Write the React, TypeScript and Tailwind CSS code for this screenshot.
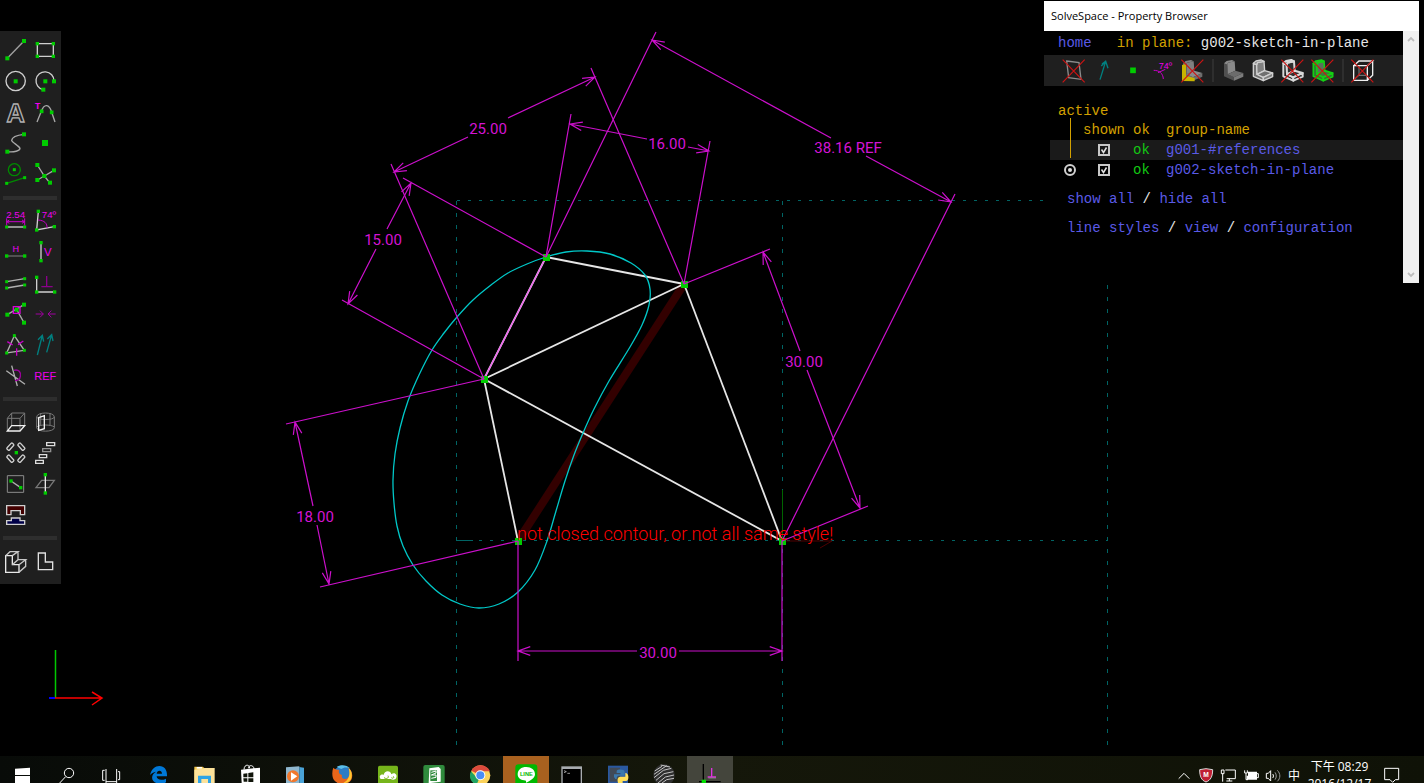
import React from "react";

type Pt = [number, number];

const GREEN = "#00cc00";
const MAG = "#c800c8";
const WHITE = "#cfcfcf";
const GRAY = "#8c8c8c";
const SANS = '"Liberation Sans", sans-serif';

/* ---------- small drawing helpers ---------- */

function Dots({ at, s = 10 }: { at: Pt[]; s?: number }) {
  return (
    <g fill={GREEN}>
      {at.map(([x, y], i) => (
        <rect key={i} x={x - s / 2} y={y - s / 2} width={s} height={s} />
      ))}
    </g>
  );
}

function P({ d, c = WHITE, w = 4, f = "none" }: { d: string; c?: string; w?: number; f?: string }) {
  return <path d={d} stroke={c} strokeWidth={w} fill={f} />;
}

function Label({ x, y, size, bold, children }: { x: number; y: number; size: number; bold?: boolean; children: string }) {
  return (
    <text x={x} y={y} fontSize={size} fontFamily={SANS} fontWeight={bold ? 700 : 400} fill="#f000f0" textAnchor="middle">
      {children}
    </text>
  );
}

/* ---------- left toolbar ---------- */

type Tool = { name: string; art: React.ReactNode };

const drawTools: Tool[] = [
  { name: "Line segment", art: <><P d="M22 100 L72 48" c="#a0a0a0" /><Dots at={[[22, 100], [72, 48]]} s={12} /></> },
  { name: "Rectangle", art: <><P d="M112 56H160V94H112Z" /><Dots at={[[112, 56], [160, 56], [112, 94], [160, 94]]} /></> },
  { name: "Circle", art: <><circle cx={47} cy={168} r={29} stroke={WHITE} strokeWidth={4} fill="none" /><Dots at={[[47, 169]]} s={12} /></> },
  { name: "Arc", art: <><P d="M162 168 A27 27 0 1 0 130 194" /><Dots at={[[136, 169], [162, 169], [130, 194]]} s={12} /></> },
  {
    name: "Text",
    art: (
      <text x={47} y={291} fontSize={76} fontFamily={SANS} fontWeight={700} textAnchor="middle" fill="none" stroke="#b0b0b0" strokeWidth={4}>
        A
      </text>
    ),
  },
  {
    name: "Tangent arc",
    art: (
      <>
        <P d="M111 291 L124 259 C132 236 148 236 155 262 L165 291" c="#a8a8a8" />
        <Label x={113} y={252} size={26} bold>T</Label>
        <Dots at={[[125, 259], [155, 262]]} s={11} />
      </>
    ),
  },
  { name: "Bezier spline", art: <><P d="M22 380 C42 382 60 378 60 370 C56 362 36 352 35 346 C36 336 54 330 72 328" c="#a8a8a8" /><Dots at={[[22, 380], [72, 328]]} s={12} /></> },
  { name: "Datum point", art: <Dots at={[[135, 354]]} s={18} /> },
  {
    name: "Toggle construction",
    art: (
      <>
        <circle cx={43} cy={434} r={18} stroke="#008a00" strokeWidth={4} fill="none" />
        <P d="M20 475 L74 458" c="#008a00" />
        <Dots at={[[43, 434], [20, 475], [74, 458]]} s={9} />
      </>
    ),
  },
  {
    name: "Split curves",
    art: (
      <>
        <P d="M112 420 L133 453 L149 473 M112 465 L133 453 L162 436" c="#a8a8a8" />
        <Dots at={[[112, 420], [133, 453], [150, 473], [112, 465], [162, 436]]} s={12} />
      </>
    ),
  },
];

const constraintTools: Tool[] = [
  {
    name: "Distance",
    art: (
      <>
        <Label x={47} y={68} size={29}>2.54</Label>
        <P d="M20 80H74 M20 70V92 M74 70V92 M28 75L20 80L28 85 M66 75L74 80L66 85" c={MAG} w={3} />
        <P d="M20 96H74" />
        <Dots at={[[20, 96], [74, 96]]} s={9} />
      </>
    ),
  },
  {
    name: "Angle",
    art: (
      <>
        <P d="M115 49 L110 105 L163 95" />
        <P d="M114 75 C134 76 142 86 141 99" c={MAG} w={3} />
        <Label x={147} y={68} size={29}>74º</Label>
        <Dots at={[[115, 49], [110, 105], [163, 95]]} />
      </>
    ),
  },
  { name: "Horizontal", art: <><P d="M20 183H74" c="#6a6a6a" /><Label x={47} y={171} size={27}>H</Label><Dots at={[[20, 183], [74, 183]]} /></> },
  { name: "Vertical", art: <><P d="M123 143V197" /><Label x={143} y={184} size={34}>V</Label><Dots at={[[123, 143], [123, 197]]} /></> },
  { name: "Parallel", art: <><P d="M20 260L74 251 M20 279L74 270" c="#b0b0b0" /><Dots at={[[20, 260], [74, 251], [20, 279], [74, 270]]} s={9} /></> },
  { name: "Perpendicular", art: <><P d="M110 247V291H164" /><P d="M124 275H158 M140 243V275" c="#8a008a" /><Dots at={[[110, 247], [110, 291], [164, 291]]} /></> },
  {
    name: "Point on curve",
    art: (
      <>
        <P d="M22 359L72 329 M50 344L72 383" c="#a8a8a8" />
        <Dots at={[[22, 359], [72, 329], [72, 383], [50, 344]]} s={12} />
        <P d="M40 335H60V355H40Z" c="#d800d8" />
      </>
    ),
  },
  { name: "Symmetric", art: <P d="M107 357H130 M120 347L130 357L120 367 M167 357H144 M154 347L144 357L154 367" c="#a000a0" w={3} /> },
  {
    name: "Equal",
    art: (
      <>
        <P d="M43 422L20 474L73 466Z" c="#b0b0b0" />
        <P d="M22 440L38 450 M70 438L54 449 M50 460V482" c={MAG} />
        <Dots at={[[43, 422], [20, 474], [73, 466]]} s={9} />
      </>
    ),
  },
  { name: "Same orientation", art: <P d="M112 480L127 421 M114 434L127 421L131 440 M140 472L155 419 M142 432L155 419L159 438" c="#008080" /> },
  { name: "Other supplementary angle", art: <><P d="M35 512L52 573 M19 527L75 568" c="#b0b0b0" /><P d="M42 526C56 522 64 532 61 544C60 552 54 558 45 556" c="#a000a0" /></> },
  { name: "Reference", art: <Label x={136} y={556} size={33}>REF</Label> },
];

const groupTools: Tool[] = [
  {
    name: "Extrude",
    art: (
      <>
        <P d="M22 108V70L35 54H74V92 M22 70H60L74 54 M60 70V108 M35 54V92" c="#787878" w={3} />
        <P d="M22 108H60L74 92H35Z" c="#f0f0f0" />
      </>
    ),
  },
  {
    name: "Lathe",
    art: (
      <>
        <P d="M110 66C110 50 163 50 163 66C163 76 110 76 110 66 M110 66V98C110 112 163 112 163 98V66 M122 54V92 M150 54V92 M110 96C118 88 154 88 163 96" c="#787878" w={3} />
        <P d="M116 68L133 62V101L116 106Z" c="#f0f0f0" />
      </>
    ),
  },
  {
    name: "Step rotating",
    art: (
      <>
        <g stroke={WHITE} strokeWidth={4} fill="none">
          <rect x={-12} y={-5} width={24} height={10} rx={3} transform="translate(31 155) rotate(-48)" />
          <rect x={-12} y={-5} width={24} height={10} rx={3} transform="translate(64 155) rotate(48)" />
          <rect x={-12} y={-5} width={24} height={10} rx={3} transform="translate(31 191) rotate(48)" />
          <rect x={-12} y={-5} width={24} height={10} rx={3} transform="translate(64 191) rotate(-48)" />
        </g>
        <Dots at={[[49, 173]]} />
      </>
    ),
  },
  { name: "Step translating", art: <><P d="M140 143H164V152H140Z M118 179H140V188H118Z M107 196H130V205H107Z" c="#dcdcdc" /><P d="M128 161H152V170H128Z" c="#909090" /></> },
  { name: "Sketch in workplane", art: <><P d="M22 242H71V292H22Z" c="#8c8c8c" w={3} /><P d="M33 258L62 278" c="#b0b0b0" /><Dots at={[[33, 258], [62, 278]]} /></> },
  { name: "Sketch in 3d", art: <><P d="M108 278L125 256H163L147 278Z" c="#787878" /><P d="M136 238V294" c="#e8e8e8" /><Dots at={[[136, 239], [136, 294]]} /></> },
  { name: "Link", art: <><P d="M20 332H74V359H61V347H33V359H20Z" f="#440000" /><P d="M20 388V377H34V369H60V377H74V388Z" f="#000048" /></> },
];

const viewTools: Tool[] = [
  {
    name: "Nearest isometric view",
    art: (
      <>
        <P d="M17 482H37V509H57V532H17Z" c="#e8e8e8" />
        <P d="M17 482L30 470H54L37 482 M54 470V494 M37 509L54 494H77L57 509 M77 494V514L57 532" c="#c8c8c8" />
      </>
    ),
  },
  { name: "Align view to workplane", art: <P d="M115 474H136V501H158V524H115Z" c="#e0e0e0" /> },
];

function ToolGroup({ tools, top }: { tools: Tool[]; top: number }) {
  return (
    <div className="grid grid-cols-2">
      {tools.map((t, i) => (
        <button key={t.name} type="button" aria-label={t.name} className="h-[31px] w-[30px]">
          <svg viewBox={`${(i % 2) * 90} ${top + Math.floor(i / 2) * 93} 90 93`} className="h-[31px] w-[30px]">
            {t.art}
          </svg>
        </button>
      ))}
    </div>
  );
}

function Divider() {
  return <div className="mx-[3px] mt-1.5 mb-[5px] h-1 bg-[#2e2e2e]" />;
}

function Toolbar() {
  return (
    <nav aria-label="Sketch tools" className="relative mt-[31px] w-[61px] self-start bg-[#1f1f1f] pt-1 pr-px pb-2">
      <ToolGroup tools={drawTools} top={30} />
      <Divider />
      <ToolGroup tools={constraintTools} top={30} />
      <Divider />
      <ToolGroup tools={groupTools} top={33} />
      <Divider />
      <ToolGroup tools={viewTools} top={450} />
    </nav>
  );
}

/* ---------- sketch canvas ---------- */

const A: Pt = [546, 257];
const B: Pt = [684, 284];
const C: Pt = [484, 379];
const D: Pt = [518, 541];
const E: Pt = [782, 541];

type Dim = { text: string; at: Pt; ext: [Pt, Pt][]; segs: [Pt, Pt][] };

// Each segment starts at its arrow tip and ends next to the dimension text.
const dims: Dim[] = [
  { text: "25.00", at: [488, 134], ext: [[C, [391, 164]], [B, [591, 68]]], segs: [[[394, 172], [468, 137]], [[595, 77], [508, 118]]] },
  { text: "16.00", at: [667, 149], ext: [[A, [571, 114]], [B, [710, 141]]], segs: [[[570, 124], [647, 139]], [[709, 151], [688, 147]]] },
  { text: "38.16 REF", at: [848, 153], ext: [[A, [656, 32]], [E, [955, 194]]], segs: [[[652, 40], [831, 138]], [[951, 202], [866, 156]]] },
  { text: "15.00", at: [383, 245], ext: [[A, [403, 178]], [C, [342, 300]]], segs: [[[411, 183], [387, 229]], [[348, 304], [376, 249]]] },
  { text: "30.00", at: [804, 367], ext: [[B, [770, 249]], [E, [868, 506]]], segs: [[[763, 252], [800, 351]], [[860, 508], [807, 370]]] },
  { text: "18.00", at: [315, 522], ext: [[C, [286, 424]], [D, [320, 587]]], segs: [[[295, 422], [313, 506]], [[329, 584], [317, 525]]] },
  { text: "30.00", at: [658, 658], ext: [[D, [518, 661]], [E, [782, 661]]], segs: [[[518, 651], [637, 651]], [[782, 651], [679, 651]]] },
];

const curve: Pt[] = [
  [546, 257], [566, 252], [587, 251], [610, 254], [631, 263], [645, 275], [650, 289], [649, 305], [642, 325], [630, 347],
  [609, 381], [594, 409], [583, 433], [574, 455], [565, 481], [556, 511], [547, 541], [535, 570], [518, 592], [499, 604],
  [479, 608], [460, 604], [442, 595], [426, 581], [413, 565], [403, 546], [397, 526], [394, 503], [393, 480], [395, 454],
  [400, 428], [408, 401], [419, 375], [432, 350], [444, 333], [457, 317], [473, 300], [491, 285], [508, 273], [527, 264],
];

function smooth(pts: Pt[]) {
  const n = pts.length;
  let d = `M${pts[0][0]} ${pts[0][1]}`;
  for (let i = 0; i < n; i++) {
    const [p0, p1, p2, p3] = [pts[(i + n - 1) % n], pts[i], pts[(i + 1) % n], pts[(i + 2) % n]];
    d += `C${p1[0] + (p2[0] - p0[0]) / 6} ${p1[1] + (p2[1] - p0[1]) / 6} ${p2[0] - (p3[0] - p1[0]) / 6} ${p2[1] - (p3[1] - p1[1]) / 6} ${p2[0]} ${p2[1]}`;
  }
  return d + "Z";
}

function seg([a, b]: [Pt, Pt]) {
  return `M${a[0]} ${a[1]}L${b[0]} ${b[1]}`;
}

function arrow([tip, to]: [Pt, Pt]) {
  const dir = Math.atan2(to[1] - tip[1], to[0] - tip[0]);
  const wing = (s: number) => `${tip[0] + 13 * Math.cos(dir + s)} ${tip[1] + 13 * Math.sin(dir + s)}`;
  return `${seg([tip, to])}M${wing(0.34)}L${tip[0]} ${tip[1]}L${wing(-0.34)}`;
}

function Sketch() {
  return (
    <svg className="absolute inset-0 h-full w-full" aria-label="Sketch">
      <g stroke="#006464" strokeWidth={1} fill="none" shapeRendering="crispEdges">
        <path d="M457 200.5H1108 M457 540.5H1108" strokeDasharray="3 8" />
        <path d="M456.5 201V750 M782.5 201V750 M1107.5 201V750" strokeDasharray="4 8" />
        <path d="M460 540.5H473" />
      </g>
      <path d={seg([B, D])} stroke="#330000" strokeWidth={8} />
      <path d="M782.5 541V490" stroke="#006400" />
      <path d="M782 541H832 M832 541L820 548" stroke="#500000" fill="none" />
      <g stroke="#e6e6e6" strokeWidth={1.8}>
        {([[A, B], [A, C], [C, B], [C, D], [C, E], [B, E]] as [Pt, Pt][]).map((s, i) => (
          <path key={i} d={seg(s)} />
        ))}
      </g>
      <path d={seg([A, C])} stroke="#f060f0" strokeWidth={1.4} />
      <path d={smooth(curve)} stroke="#00c8c8" strokeWidth={1.3} fill="none" />
      <g fill={GREEN}>
        {[A, B, C, D, E].map(([x, y], i) => (
          <rect key={i} x={x - 3} y={y - 3} width={7} height={7} />
        ))}
      </g>
      <g stroke="#cc10cc" strokeWidth={1.2} fill="none">
        {dims.map((m, i) => (
          <path key={i} d={m.ext.map(seg).join("") + m.segs.map(arrow).join("")} />
        ))}
      </g>
      <g fontFamily="Roboto, sans-serif" fontSize={15} fill="#d414d4" textAnchor="middle">
        {dims.map((m, i) => (
          <text key={i} x={m.at[0]} y={m.at[1]}>
            {m.text}
          </text>
        ))}
      </g>
      <text x={517} y={540} fontFamily="Roboto, sans-serif" fontSize={18} fontWeight={300} fill="#ff0000">
        not closed contour, or not all same style!
      </text>
      <path d="M55.5 650V698" stroke="#00c800" strokeWidth={1.5} />
      <path d="M49 698H55" stroke="#0000ff" strokeWidth={2} />
      <path d="M55 698H102 M92 692L102 698L92 705" stroke="#ff0000" strokeWidth={1.5} fill="none" />
    </svg>
  );
}

/* ---------- property browser ---------- */

function Cross({ x, y = 179 }: { x: number; y?: number }) {
  return <path d={`M${x} ${y}l66 68M${x + 66} ${y}l-66 68`} stroke="#cc1414" strokeWidth={3.5} />;
}

type ChairProps = { x: number; side: string; back: string; seat: string; front: string; line?: string; w?: number };

function Chair({ x, side, back, seat, front, line = "none", w = 4 }: ChairProps) {
  return (
    <g transform={`translate(${x} 180)`} stroke={line} strokeWidth={w} strokeLinejoin="round">
      <path d="M2 10L12 14L13 42L32 52V62L2 49Z" fill={side} />
      <path d="M12 14L14 8L34 4L36 32L13 43Z" fill={back} />
      <path d="M2 10L10 3L26 0L34 4L14 8L12 14Z" fill={back} />
      <path d="M13 43L36 32L60 39L32 52Z" fill={seat} />
      <path d="M32 52L60 39V50L32 62Z" fill={front} />
    </g>
  );
}

type ViewIcon = { name: string; x: number; art: React.ReactNode };

const viewIcons: ViewIcon[][] = [
  [
    { name: "Workplanes", x: 54, art: <><P d="M80 183L117 188L123 238L86 233Z" c={GRAY} /><Cross x={68} /></> },
    { name: "Normals", x: 144, art: <P d="M180 239L197 184 M184 198L197 184L204 205 M186 192L197 184" c="#008080" /> },
    { name: "Points", x: 234, art: <Dots at={[[279, 211]]} s={17} /> },
    {
      name: "Constraints",
      x: 324,
      art: (
        <>
          <P d="M341 211C358 211 369 220 370 237 M354 218L376 208" c={MAG} w={3} />
          <Label x={376} y={206} size={27}>74º</Label>
        </>
      ),
    },
    {
      name: "Faces",
      x: 414,
      art: (
        <>
          <Chair x={427} side="#6e6e6e" back="#808080" seat="#8c8c8c" front="#6e6e6e" />
          <path d="M426 195L438 192V228L464 234V244L426 243Z" fill="#c8b400" />
          <Cross x={424} />
        </>
      ),
    },
  ],
  [
    { name: "Shaded", x: 534, art: <Chair x={550} side="#505050" back="#8a8a8a" seat="#6c6c6c" front="#7c7c7c" /> },
    { name: "Edges", x: 624, art: <Chair x={638} side="#707070" back="#808080" seat="#707070" front="#808080" line="#d0d0d0" /> },
    { name: "Outlines", x: 714, art: <><Chair x={728} side="#1f1f1f" back="#303030" seat="#303030" front="#1f1f1f" line="#d8d8d8" w={6} /><Cross x={724} /></> },
    { name: "Mesh", x: 804, art: <><Chair x={818} side="#2f7a2f" back="#5a705a" seat="#3c7a3c" front="#2f7a2f" line="#14d014" w={5} /><Cross x={814} /></> },
  ],
  [
    {
      name: "Hidden lines",
      x: 924,
      art: (
        <>
          <P d="M941 197H982V241H941Z M941 197L957 183H998L982 197 M998 183V226L982 241" c="#f0f0f0" />
          <P d="M957 197V226L941 241 M957 226H982" c="#b0b0b0" w={2} />
          <Cross x={934} />
        </>
      ),
    },
  ],
];

function Tick({ name }: { name: string }) {
  return (
    <label className="relative ml-[15px] block size-3">
      <input type="checkbox" defaultChecked aria-label={name} className="peer block size-3 appearance-none border-2 border-[#c8c8c8]" />
      <svg viewBox="0 0 12 12" className="pointer-events-none absolute inset-0 hidden size-3 peer-checked:block">
        <path d="M3.5 5.5L5.5 8.5L8.5 3.5" stroke="#e0e0e0" strokeWidth={1.5} fill="none" />
      </svg>
    </label>
  );
}

function Link({ children }: { children: string }) {
  return (
    <a href="#" className="text-[#5a5ae6]">
      {children}
    </a>
  );
}

function PropertyBrowser() {
  return (
    <section className="relative mt-px mr-[5px] w-[375px] self-start bg-black font-['Liberation_Mono',monospace] text-sm leading-5 text-[#e6e6e6]">
      <h1 className="flex h-[30px] items-center bg-white pl-[7px] font-['Open_Sans',sans-serif] text-[11px] text-black">
        SolveSpace - Property Browser
      </h1>
      <div className="flex">
        <div className="min-w-0 flex-1 pb-[45px]">
          <p className="h-6 pl-3.5 leading-6 whitespace-pre">
            <Link>home</Link>
            {"   "}
            <span className="text-[#d2a000]">in plane:</span>
            {" g002-sketch-in-plane"}
          </p>
          <div className="flex h-[31px] bg-[#1f1f1f] pl-3.5">
            {viewIcons.map((group, g) => (
              <div key={g} className="flex">
                {g > 0 && <div className="mx-1 my-1 w-[2px] bg-[#2e2e2e]" />}
                {group.map((v) => (
                  <button key={v.name} type="button" aria-label={v.name} className="w-[30px]">
                    <svg viewBox={`${v.x} 165 90 93`} className="h-[31px] w-[30px]">
                      {v.art}
                    </svg>
                  </button>
                ))}
              </div>
            ))}
          </div>
          <div className="pt-[15px] pl-1.5">
            <table className="w-full table-fixed border-collapse text-left">
              <colgroup>
                <col className="w-[33px]" />
                <col className="w-[50px]" />
                <col className="w-[33px]" />
                <col />
              </colgroup>
              <thead className="text-[#d2a000]">
                <tr className="h-5">
                  <th colSpan={4} className="p-0 pl-2 font-normal">active</th>
                </tr>
                <tr className="h-[19px] leading-[19px]">
                  <td className="relative p-0">
                    <span className="absolute -top-[3px] left-5 h-10 w-px bg-[#d2a000]" />
                  </td>
                  <th className="p-0 font-normal">shown</th>
                  <th className="p-0 font-normal">ok</th>
                  <th className="p-0 font-normal">group-name</th>
                </tr>
              </thead>
              <tbody>
                <tr className="h-5 bg-[#1a1a1a]">
                  <td className="p-0" />
                  <td className="p-0"><Tick name="Show g001-#references" /></td>
                  <td className="p-0 text-[#14c814]">ok</td>
                  <td className="p-0"><Link>g001-#references</Link></td>
                </tr>
                <tr className="h-5">
                  <td className="p-0">
                    <input
                      type="radio"
                      defaultChecked
                      aria-label="Activate g002-sketch-in-plane"
                      className="ml-3.5 grid size-3 appearance-none place-items-center rounded-full border-2 border-[#d0d0d0] before:size-1 before:rounded-full before:bg-[#e0e0e0] before:content-['']"
                    />
                  </td>
                  <td className="p-0"><Tick name="Show g002-sketch-in-plane" /></td>
                  <td className="p-0 text-[#14c814]">ok</td>
                  <td className="p-0"><Link>g002-sketch-in-plane</Link></td>
                </tr>
              </tbody>
            </table>
          </div>
          <p className="mt-[9px] pl-[23px]">
            <Link>show all</Link> / <Link>hide all</Link>
          </p>
          <p className="mt-[9px] pl-[23px]">
            <Link>line styles</Link> / <Link>view</Link> / <Link>configuration</Link>
          </p>
        </div>
        <div className="flex w-4 flex-col items-center justify-between bg-[#f0f0f0] py-[5px]">
          <svg viewBox="0 0 8 6" className="h-1.5 w-2"><path d="M1 5L4 2L7 5" stroke="#bdbdbd" strokeWidth={1.8} fill="none" /></svg>
          <svg viewBox="0 0 8 6" className="h-1.5 w-2"><path d="M1 1L4 4L7 1" stroke="#bdbdbd" strokeWidth={1.8} fill="none" /></svg>
        </div>
      </div>
    </section>
  );
}

/* ---------- taskbar ---------- */

const system: Tool[] = [
  { name: "Start", art: <path d="M45 71L90 68V90H45Z M45 93H90V114H45Z" fill="#fff" /> },
  { name: "Search", art: <><circle cx={207} cy={84} r={14} stroke="#fff" strokeWidth={3} fill="none" /><P d="M197 95L179 114" c="#fff" w={3} /></> },
  { name: "Task view", art: <P d="M318 72V114 M350 72V114 M318 110H350 M314 76H308V106H314 M354 80H359V104H354" c="#fff" w={3} /> },
];

type App = { name: string; x: number; bg?: string; art: React.ReactNode };

const apps: App[] = [
  {
    name: "Edge",
    x: 405,
    art: <path d="M450 90C454 72 466 63 478 63C494 63 502 76 501 94H470C470 104 484 108 498 101V112C494 116 470 120 460 108C452 98 458 86 468 80C460 81 454 85 450 90ZM470 86H486C486 74 471 74 470 86Z" fill="#0078d7" />,
  },
  {
    name: "File Explorer",
    x: 543,
    art: <><path d="M583 65H608L613 69H642V114H583Z" fill="#f5c84b" /><path d="M590 66h16v5h-16z" fill="#fff" /><path d="M583 74L615 69H644V114H583Z" fill="#fde29a" /><path d="M594 92H633V114H624V102H604V114H594Z" fill="#2ea3e6" /></>,
  },
  {
    name: "Store",
    x: 681,
    art: <><P d="M732 74C732 58 748 56 749 70 M745 70C746 58 762 60 762 72" c="#fff" w={3} /><path d="M723 74L780 68V114H725Z" fill="#fff" /><path d="M730 86L742 85V97H730Z M745 84L760 82V97H745Z M730 100H742V110H731Z M745 100H760V111H745Z" fill="#10140a" /></>,
  },
  {
    name: "Media Player",
    x: 819,
    art: <><path d="M858 67L898 64V114H858Z" fill="#8fb7cf" /><path d="M898 66L912 68V114H898Z" fill="#4aa3d8" /><circle cx={879} cy={94} r={18} fill="#f0782d" /><path d="M873 82L892 94L873 107Z" fill="#fff" /></>,
  },
  {
    name: "Firefox",
    x: 957,
    art: <><circle cx={1028} cy={90} r={28} fill="#2b7cc4" /><path d="M1010 66C1020 58 1040 58 1050 70C1042 66 1030 66 1024 72Z" fill="#5cc0ea" /><path d="M1000 68C1004 72 1010 74 1018 74C1014 82 1018 88 1026 90C1022 100 1034 106 1044 98C1052 90 1050 76 1044 68C1056 74 1060 92 1054 104C1044 122 1008 122 999 100C996 90 996 78 1000 68Z" fill="#e8661a" /><path d="M1046 70C1056 78 1058 94 1052 104C1046 112 1038 114 1030 114C1046 106 1052 90 1046 70Z" fill="#ffc730" /></>,
  },
  {
    name: "Cloud drive",
    x: 1095,
    art: <><rect x={1134} y={62} width={60} height={64} rx={5} fill="#76b51b" /><path d="M1142 102C1134 92 1146 86 1151 90C1152 76 1172 74 1174 88C1184 80 1194 90 1188 100C1184 106 1176 104 1172 102Z" fill="#fff" /><P d="M1152 98C1160 104 1168 98 1164 92 M1174 98C1178 102 1184 98 1180 94" c="#76b51b" w={3} /></>,
  },
  {
    name: "Notebook",
    x: 1233,
    art: <><rect x={1270} y={60} width={64} height={60} rx={6} fill="#2f8a3c" /><path d="M1288 70L1316 66L1322 72V110L1292 114H1286Z" fill="#fff" /><path d="M1291 76H1311V108H1291Z" fill="#2f8a3c" /><P d="M1294 82L1308 78V84L1294 90L1308 90V97L1294 100" c="#fff" w={3} /></>,
  },
  {
    name: "Chrome",
    x: 1371,
    art: <><circle cx={1441} cy={91} r={30} fill="#fbd25a" /><path d="M1441 91L1414 77C1424 56 1458 54 1470 79H1441Z" fill="#dc4a3c" /><path d="M1413 79L1436 104L1430 119C1410 112 1406 94 1413 79Z" fill="#1ea362" /><circle cx={1441} cy={91} r={15} fill="#fff" /><circle cx={1441} cy={91} r={12} fill="#4a8cf5" /></>,
  },
  {
    name: "LINE",
    x: 1509,
    bg: "bg-[#a9611f]",
    art: (
      <>
        <rect x={1546} y={58} width={66} height={66} rx={10} fill="#00b900" />
        <path d="M1553 88C1553 74 1564 66 1579 66C1594 66 1605 75 1605 88C1605 98 1592 108 1578 113V107C1562 106 1553 99 1553 88Z" fill="#fff" />
        <text x={1579} y={94} fontSize={17} fontWeight={700} fontFamily={SANS} fill="#00b900" textAnchor="middle">LINE</text>
      </>
    ),
  },
  {
    name: "Command Prompt",
    x: 1647,
    art: <><path d="M1684 64H1746V114H1684Z" fill="#a8acb0" /><path d="M1688 72H1742V114H1688Z" fill="#000" /><P d="M1692 77L1699 80L1692 83 M1702 85H1710" c="#ddd" w={2} /></>,
  },
  {
    name: "Python",
    x: 1785,
    art: <><path d="M1824 62H1884V114H1824Z" fill="#2a58a0" /><path d="M1829 68H1860V110H1829Z" fill="#404a58" /><path d="M1842 96V88H1862V84H1850V78C1852 72 1874 72 1874 80V92H1856C1852 92 1850 96 1850 102H1846Z" fill="#3b78ad" /><path d="M1854 114C1850 98 1856 95 1864 95H1876V84C1888 84 1888 108 1878 108H1868V114Z" fill="#ffdf5a" /></>,
  },
  {
    name: "Sphere viewer",
    x: 1923,
    art: <><circle cx={1992} cy={90} r={32} fill="#303030" /><P d="M1964 78L1986 64 M1962 88L2000 62 M1962 98L1990 76L2014 70 M1968 106L1992 86L2020 80 M1974 114L1996 96L2022 90 M1986 114L2000 104L2022 100 M1982 60L2010 66" c="#c4c4c4" w={3} /></>,
  },
  {
    name: "SolveSpace",
    x: 2061,
    bg: "bg-[#44453c]",
    art: <><P d="M2110 57V114 M2097 110H2162" c="#000" w={4} /><P d="M2123 96H2148 M2135 69V96" c="#e030e0" w={4} /><P d="M2125 99H2148" c="#a0a0a0" w={2} /><rect x={2105} y={104} width={13} height={13} fill="#00e000" /></>,
  },
];

const tray: Tool[] = [
  { name: "Show hidden icons", art: <P d="M86 101L102 85L118 101" c="#fff" w={3} /> },
  {
    name: "McAfee",
    art: (
      <>
        <path d="M149 74L168 71L188 74C188 94 182 106 168 111C154 106 149 94 149 74Z" fill="#c01f34" stroke="#d8d8d8" strokeWidth={3} />
        <text x={168} y={97} fontSize={20} fontWeight={700} fontFamily={SANS} fill="#fff" textAnchor="middle">M</text>
      </>
    ),
  },
  { name: "Network", art: <P d="M226 75H256V101H230 M238 101V108 M229 108H247 M214 75H222V86H214Z M218 86V110" c="#fff" w={3} /> },
  { name: "Battery", art: <><path d="M294 80H321V104H290V92H294Z" fill="#fff" /><P d="M321 86H325V98H321 M284 76V84H292V76 M288 84V104H294" c="#fff" w={3} /></> },
  { name: "Volume", art: <><P d="M349 85H355L362 77V108L355 100H349Z M368 87C371 90 371 96 368 99" c="#fff" w={3} /><P d="M375 82C380 88 380 98 375 104 M382 76C392 86 392 100 382 109" c="#9a9a9a" w={3} /></> },
];

function Taskbar() {
  return (
    <footer className="relative flex h-[27px] justify-between overflow-hidden bg-linear-to-r from-[#080b08] via-[#15170a] to-[#0f1207] text-white">
      <div className="flex">
        {system.map((s, i) => (
          <button key={s.name} type="button" aria-label={s.name} className="w-[45px]">
            <svg viewBox={`${i * 135} 33 135 81`} className="h-[27px] w-[45px]">{s.art}</svg>
          </button>
        ))}
        {apps.map((a) => (
          <button key={a.name} type="button" aria-label={a.name} className={`w-[46px] ${a.bg ?? ""}`}>
            <svg viewBox={`${a.x} 33 138 81`} className="h-[27px] w-[46px]">{a.art}</svg>
          </button>
        ))}
      </div>
      <div className="flex pr-3.5 font-['Open_Sans','Noto_Sans_CJK_TC',sans-serif]">
        {tray.map((t, i) => (
          <button key={t.name} type="button" aria-label={t.name} className="w-[22px]">
            <svg viewBox={`${69 + i * 66} 33 66 81`} className="h-[27px] w-[22px]">{t.art}</svg>
          </button>
        ))}
        <button type="button" className="w-[22px] pt-2.5 text-xs leading-5">中</button>
        <time className="flex w-[69px] flex-col items-center pt-[2px] text-xs leading-[17px] whitespace-nowrap">
          <span>下午 08:29</span>
          <span>2016/12/17</span>
        </time>
        <button type="button" aria-label="Notifications" className="w-9">
          <svg viewBox="674 33 108 81" className="h-[27px] w-9">
            <P d="M706 70H748V104H738L730 112L722 104H706Z" c="#fff" w={3} />
          </svg>
        </button>
      </div>
    </footer>
  );
}

export default function App() {
  return (
    <div className="relative flex h-screen flex-col overflow-hidden bg-black">
      <Sketch />
      <main className="flex min-h-0 flex-1 justify-between">
        <Toolbar />
        <PropertyBrowser />
      </main>
      <Taskbar />
    </div>
  );
}
